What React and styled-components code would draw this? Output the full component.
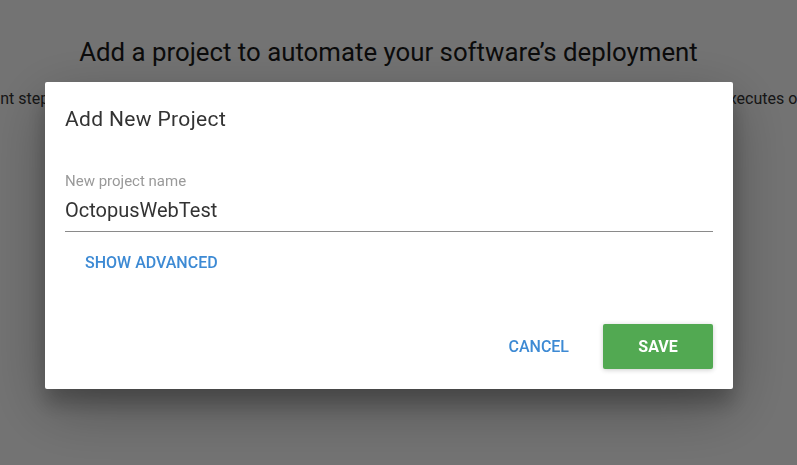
import React from 'react'
import styled, { createGlobalStyle } from 'styled-components'

const GlobalStyle = createGlobalStyle`
    html, body {
        margin: 0;
        padding: 0;
        background: #ffffff;
        font-family: Roboto, "Noto Sans", Arial, sans-serif;
        overflow: hidden;
    }
`;

const Page = styled.div`
    height: 465px;
    display: flex;
    flex-direction: column;
    align-items: center;
    padding-top: 35px;
    padding-right: 20px;
    box-sizing: border-box;
    overflow: hidden;
`;

const Heading = styled.h2`
    margin: 0;
    font-size: 25.8px;
    font-weight: 400;
    line-height: 34px;
    color: #1a1a1a;
    white-space: nowrap;
`;

const Intro = styled.div`
    margin-top: 18px;
    width: 100%;
    display: flex;
    justify-content: center;
    font-size: 16px;
    line-height: 24px;
    color: #333;
    white-space: nowrap;
`;

const Overlay = styled.div`
    position: fixed;
    inset: 0;
    background: rgba(0, 0, 0, 0.55);
    display: flex;
    justify-content: center;
    align-items: flex-start;
    padding-top: 82px;
    padding-right: 19px;
    box-sizing: border-box;
`;

const Dialog = styled.div`
    width: 688px;
    height: 307px;
    background: #fff;
    border-radius: 2px;
    box-shadow: 0 19px 60px rgba(0, 0, 0, 0.3), 0 15px 20px rgba(0, 0, 0, 0.22);
    display: flex;
    flex-direction: column;
    box-sizing: border-box;
`;

const Title = styled.h3`
    margin: 0;
    padding: 23px 20px 0;
    font-size: 21px;
    font-weight: 400;
    line-height: 28px;
    color: #333;
    letter-spacing: 0.35px;
`;

const Body = styled.div`
    padding: 0 20px;
    margin-top: 40px;
    flex: 1;
`;

const Field = styled.label`
    display: block;
    border-bottom: 1px solid #8a8a8a;
`;

const FieldLabel = styled.div`
    font-size: 15px;
    line-height: 17px;
    color: #9a9a9a;
`;

const FieldInput = styled.input`
    display: block;
    width: 100%;
    border: none;
    outline: none;
    padding: 0;
    margin: 6px 0 7px;
    height: 28px;
    font-family: inherit;
    font-size: 20px;
    color: #333;
    background: transparent;
`;

const TextButton = styled.button`
    background: none;
    border: none;
    padding: 0 ${p => p.pad || 16}px;
    height: 36px;
    font-family: inherit;
    font-size: 16px;
    font-weight: 500;
    color: #3d8ad4;
    text-transform: uppercase;
    cursor: pointer;
`;

const Advanced = styled.div`
    margin-top: 12px;
`;

const Actions = styled.div`
    display: flex;
    justify-content: flex-end;
    align-items: center;
    gap: 18px;
    padding: 0 20px 20px;
`;

const SaveButton = styled.button`
    width: 110px;
    height: 45px;
    border: none;
    border-radius: 2px;
    background: #52a952;
    color: #fff;
    font-family: inherit;
    font-size: 16px;
    font-weight: 700;
    text-transform: uppercase;
    box-shadow: 0 1px 5px rgba(0, 0, 0, 0.2);
    cursor: pointer;
`;

export default function App() {
    return (
        <>
            <GlobalStyle />
            <Page>
                <Heading>Add a project to automate your software’s deployment</Heading>
                <Intro>
                    A project is a collection of the deployment steps and all its variables and roles your project needs, and the lifecycle that controls how Octopus executes on your deployment targets and hosts.
                </Intro>
            </Page>
            <Overlay>
                <Dialog>
                    <Title>Add New Project</Title>
                    <Body>
                        <Field>
                            <FieldLabel>New project name</FieldLabel>
                            <FieldInput defaultValue="OctopusWebTest" />
                        </Field>
                        <Advanced>
                            <TextButton pad={20}>Show advanced</TextButton>
                        </Advanced>
                    </Body>
                    <Actions>
                        <TextButton>Cancel</TextButton>
                        <SaveButton>Save</SaveButton>
                    </Actions>
                </Dialog>
            </Overlay>
        </>
    );
}
